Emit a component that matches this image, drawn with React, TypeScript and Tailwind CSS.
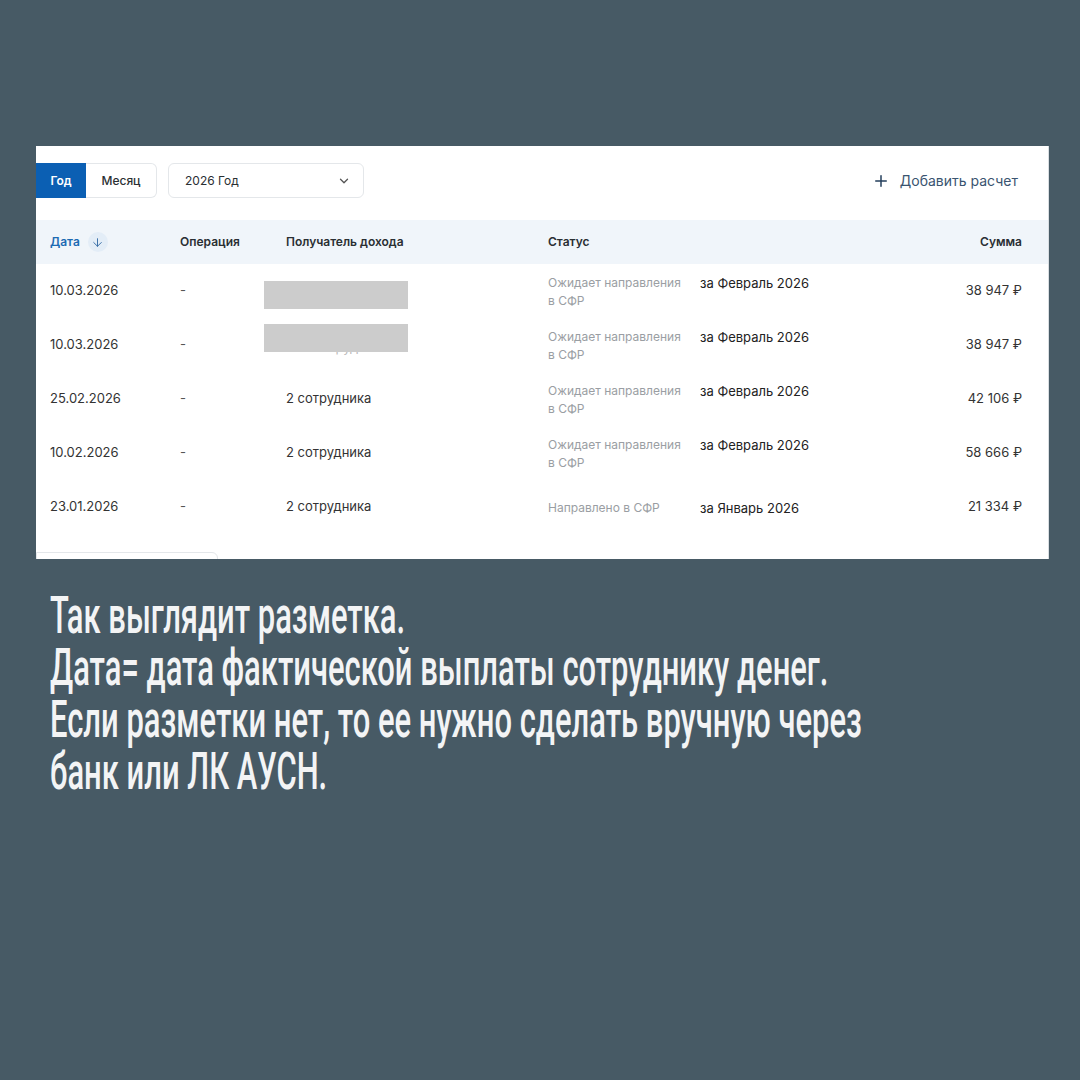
import { ChevronDown, Plus, ArrowDown } from 'lucide-react';

interface Row {
  date: string;
  recipient: string | null;
  status: string[];
  period: string;
  amount: string;
}

const rows: Row[] = [
  { date: '10.03.2026', recipient: null, status: ['Ожидает направления', 'в СФР'], period: 'за Февраль 2026', amount: '38 947 ₽' },
  { date: '10.03.2026', recipient: 'hidden', status: ['Ожидает направления', 'в СФР'], period: 'за Февраль 2026', amount: '38 947 ₽' },
  { date: '25.02.2026', recipient: '2 сотрудника', status: ['Ожидает направления', 'в СФР'], period: 'за Февраль 2026', amount: '42 106 ₽' },
  { date: '10.02.2026', recipient: '2 сотрудника', status: ['Ожидает направления', 'в СФР'], period: 'за Февраль 2026', amount: '58 666 ₽' },
  { date: '23.01.2026', recipient: '2 сотрудника', status: ['Направлено в СФР'], period: 'за Январь 2026', amount: '21 334 ₽' },
];

const cols = 'grid grid-cols-[130px_106px_262px_152px_1fr_auto] pl-[14px] pr-[26px]';

export default function App() {
  return (
    <div className="w-[1080px] h-[1080px] bg-[#475a65] pt-[146px] pl-[36px] font-['Inter','Noto_Sans',sans-serif]">
      {/* скриншот таблицы */}
      <div className="w-[1013px] h-[413px] bg-white relative overflow-hidden border-r border-[#d9dee2]">
        <div className="flex items-center pt-[17px] pr-[30px]">
          <div className="flex h-[35px]">
            <div className="w-[50px] bg-[#0b5fb3] text-white text-[12px] font-semibold flex items-center justify-center">Год</div>
            <div className="w-[71px] border border-l-0 border-[#e4e7ea] rounded-r-[6px] text-[12px] font-medium text-[#2a2f33] flex items-center justify-center">Месяц</div>
          </div>
          <div className="ml-[11px] w-[196px] h-[35px] border border-[#e4e7ea] rounded-[6px] flex items-center justify-between pl-[16px] pr-[12px] text-[12px] text-[#2a2f33]">
            <span>2026 Год</span>
            <ChevronDown size={14} strokeWidth={2.2} className="text-[#555]" />
          </div>
          <div className="ml-auto flex items-center gap-[10px] text-[14px] text-[#3a5470]">
            <Plus size={18} strokeWidth={2} className="text-[#243f5c]" />
            <span>Добавить расчет</span>
          </div>
        </div>

        <div className={`${cols} mt-[22px] h-[44px] items-center bg-[#f0f5fa] text-[12px] font-semibold text-[#2a2f33]`}>
          <div className="flex items-center text-[#1d6bb3]">
            <span>Дата</span>
            <span className="ml-[8px] w-[20px] h-[20px] rounded-full bg-[#e3edf7] flex items-center justify-center">
              <ArrowDown size={13} strokeWidth={1.8} className="text-[#3a6fa8]" />
            </span>
          </div>
          <div>Операция</div>
          <div>Получатель дохода</div>
          <div className="col-span-2">Статус</div>
          <div className="text-right">Сумма</div>
        </div>

        {rows.map((r, i) => (
          <div key={i} className={`${cols} h-[54px] items-center text-[13px] text-[#333]`}>
            <div>{r.date}</div>
            <div className="text-[#555]">-</div>
            <div className="relative h-full flex items-center">
              {r.recipient === null && <div className="absolute left-[-22px] top-[17px] w-[144px] h-[28px] bg-[#cccccc]" />}
              {r.recipient === 'hidden' && (
                <>
                  <span className="pl-[28px] pt-[6px] text-[#bbb]">сотрудник</span>
                  <div className="absolute left-[-22px] top-[6px] w-[144px] h-[28px] bg-[#cccccc]" />
                </>
              )}
              {r.recipient && r.recipient !== 'hidden' && <span>{r.recipient}</span>}
            </div>
            <div className="pt-[2px] text-[12px] leading-[18px] text-[#9a9ea3]">
              {r.status.map((s) => (
                <div key={s}>{s}</div>
              ))}
            </div>
            <div className="pt-[2px] leading-[18px] text-[#222]">
              <div>{r.period}</div>
              {r.status.length > 1 && <div>&nbsp;</div>}
            </div>
            <div className="text-right">{r.amount}</div>
          </div>
        ))}

        <div className="absolute left-0 top-[406px] w-[182px] h-[20px] border border-[#e4e7ea] rounded-tr-[6px]" />
      </div>

      <div className="mt-[31px] pl-[14px] text-[#f3f4f5] font-['Roboto','Liberation_Sans',sans-serif] font-medium text-[52px] leading-[52px]">
        <div className="origin-left scale-x-[0.595] w-[1500px] whitespace-nowrap">
          <div>Так выглядит разметка.</div>
          <div>Дата= дата фактической выплаты сотруднику денег.</div>
          <div>Если разметки нет, то ее нужно сделать вручную через</div>
          <div>банк или ЛК АУСН.</div>
        </div>
      </div>
    </div>
  );
}
